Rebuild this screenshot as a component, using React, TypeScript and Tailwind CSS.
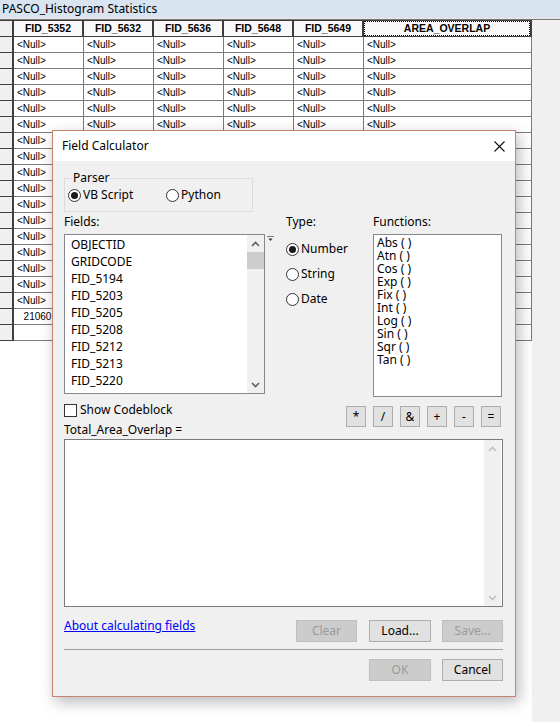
import React from "react";

const columns = ["FID_5352", "FID_5632", "FID_5636", "FID_5648", "FID_5649", "AREA_OVERLAP"];
const fields = ["OBJECTID", "GRIDCODE", "FID_5194", "FID_5203", "FID_5205", "FID_5208", "FID_5212", "FID_5213", "FID_5220"];
const functions = ["Abs", "Atn", "Cos", "Exp", "Fix", "Int", "Log", "Sin", "Sqr", "Tan"];
const operators = ["*", "/", "&", "+", "-", "="];

function Chevron({ up, color = "#606060" }: { up?: boolean; color?: string }) {
  return (
    <svg width="9" height="6" viewBox="0 0 9 6">
      <path
        d={up ? "M1 5 L4.5 1.5 L8 5" : "M1 1 L4.5 4.5 L8 1"}
        fill="none"
        stroke={color}
        strokeWidth="1.6"
      />
    </svg>
  );
}

function Radio({ checked, label }: { checked?: boolean; label: string }) {
  return (
    <div className="flex items-center h-[16px]">
      <div className="w-[13px] h-[13px] rounded-full border border-[#333333] bg-white flex items-center justify-center">
        {checked && <div className="w-[7px] h-[7px] rounded-full bg-[#1a1a1a]" />}
      </div>
      <span className="ml-[2px]">{label}</span>
    </div>
  );
}

function Button({ label, disabled, className = "" }: { label: string; disabled?: boolean; className?: string }) {
  return (
    <div
      className={`h-[22px] flex items-center justify-center border ${
        disabled ? "bg-[#cccccc] border-[#bfbfbf] text-[#9a9a9a]" : "bg-[#e1e1e1] border-[#adadad] text-black"
      } ${className}`}
    >
      {label}
    </div>
  );
}

export default function App() {
  const rows = Array.from({ length: 17 });

  return (
    <div className="relative w-[560px] h-[722px] overflow-hidden bg-white flex flex-col">
      {/* Window title */}
      <div className="h-[17px] bg-[#d9e4f1] pl-[2px] flex items-center font-['Noto_Sans',sans-serif] text-[12px] text-black">
        PASCO_Histogram Statistics
      </div>
      <div className="h-[3px] bg-[#e6e6e6] border-b border-[#7a7a7a]" />

      <div className="flex flex-1">
        {/* Table */}
        <div className="w-[532px] bg-white font-['Liberation_Sans',Arial,sans-serif] text-black">
          <div className="grid grid-cols-[14px_70px_70px_70px_70px_70px_168px] border-t border-[#3c3c3c]">
            <div className="h-[16px] bg-[#f0f0f0] border-r-2 border-b border-[#3c3c3c]" />
            {columns.map((c, i) => (
              <div
                key={c}
                className="h-[16px] bg-[#f8f8f8] border-r-2 border-b border-[#3c3c3c] flex items-stretch text-[10.5px] font-bold"
              >
                <div
                  className={`flex-1 flex items-center justify-center ${
                    i === columns.length - 1 ? "border border-dotted border-black" : ""
                  }`}
                >
                  {c}
                </div>
              </div>
            ))}

            {rows.map((_, r) => (
              <React.Fragment key={r}>
                <div className="h-[16px] bg-[#f0f0f0] border-r-2 border-b border-[#404040]" />
                {columns.map((c) => (
                  <div
                    key={c}
                    className="h-[16px] border-r border-b border-[#7a7a7a] pl-[3px] text-[10px] leading-[15px] overflow-hidden"
                  >
                    &lt;Null&gt;
                  </div>
                ))}
              </React.Fragment>
            ))}

            <div className="h-[16px] bg-[#f0f0f0] border-r-2 border-b border-[#404040]" />
            <div className="h-[16px] border-r border-b border-[#7a7a7a] pr-[1px] text-[10px] leading-[15px] text-right overflow-hidden whitespace-nowrap">
              21060.78531
            </div>
            {columns.slice(1).map((c) => (
              <div key={c} className="h-[16px] border-r border-b border-[#7a7a7a]" />
            ))}

            <div className="h-[16px] bg-[#f0f0f0] border-r-2 border-b border-[#404040]" />
            {columns.map((c) => (
              <div key={c} className="h-[16px] border-r border-b border-[#7a7a7a]" />
            ))}
          </div>
        </div>
        <div className="flex-1 bg-[#f0f0f0]" />
      </div>

      {/* Field Calculator dialog */}
      <div className="absolute left-[52px] top-[130px] w-[464px] h-[567px] border border-[#c7836d] bg-[#f0f0f0] shadow-[3px_5px_14px_rgba(0,0,0,0.28)] flex flex-col font-['Noto_Sans',sans-serif] text-[12px] leading-[16px] text-black">
        <div className="h-[30px] bg-white flex items-center justify-between pl-[9px] pr-[10px]">
          <span>Field Calculator</span>
          <svg width="11" height="11" viewBox="0 0 11 11">
            <path d="M0.5 0.5 L10.5 10.5 M10.5 0.5 L0.5 10.5" stroke="#111" strokeWidth="1.1" />
          </svg>
        </div>

        <div className="flex-1 flex flex-col pl-[11px] pr-[12px]">
          {/* Parser */}
          <div className="relative mt-[17px] w-[189px] h-[34px] border border-[#dcdcdc] flex items-center pl-[3px]">
            <span className="absolute left-[7px] -top-[9px] bg-[#f0f0f0] px-[1px]">Parser</span>
            <div className="w-[98px]">
              <Radio checked label="VB Script" />
            </div>
            <Radio label="Python" />
          </div>

          {/* Fields / Type / Functions */}
          <div className="flex mt-[2px]">
            <div className="w-[201px]">
              <div className="h-[16px]">Fields:</div>
              <div className="mt-[4px] h-[160px] border border-[#828790] bg-white flex">
                <div className="flex-1 pl-[6px] pt-[1px] overflow-hidden">
                  {fields.map((f) => (
                    <div key={f} className="leading-[17px]">
                      {f}
                    </div>
                  ))}
                </div>
                <div className="w-[17px] bg-[#f0f0f0] flex flex-col items-center">
                  <div className="h-[17px] flex items-center justify-center">
                    <Chevron up />
                  </div>
                  <div className="w-[17px] h-[17px] bg-[#cdcdcd]" />
                  <div className="flex-1" />
                  <div className="h-[17px] flex items-center justify-center">
                    <Chevron />
                  </div>
                </div>
              </div>
            </div>

            <div className="w-[21px] pt-[22px] pl-[2px]">
              <svg width="7" height="6" viewBox="0 0 7 6">
                <path d="M0 0.5 H7" stroke="#777" strokeWidth="1" />
                <path d="M1.5 2.5 H5.5 L3.5 5 Z" fill="#333" />
              </svg>
            </div>

            <div className="w-[87px]">
              <div className="h-[16px]">Type:</div>
              <div className="mt-[11px] flex flex-col gap-[9px]">
                <Radio checked label="Number" />
                <Radio label="String" />
                <Radio label="Date" />
              </div>
            </div>

            <div className="w-[129px]">
              <div className="h-[16px]">Functions:</div>
              <div className="mt-[4px] h-[163px] border border-[#828790] bg-white pl-[3px] pt-[1px]">
                {functions.map((f) => (
                  <div key={f} className="leading-[13px]">
                    {f} ( )
                  </div>
                ))}
              </div>
            </div>
          </div>

          {/* Codeblock + operators */}
          <div className="flex justify-between mt-[6px]">
            <div className="flex flex-col">
              <div className="flex items-center h-[14px]">
                <div className="w-[13px] h-[13px] border border-[#333333] bg-white" />
                <span className="ml-[3px]">Show Codeblock</span>
              </div>
              <div className="mt-[5px] h-[16px]">Total_Area_Overlap =</div>
            </div>
            <div className="flex gap-[7px] mt-[3px] mr-[2px]">
              {operators.map((o) => (
                <div
                  key={o}
                  className="w-[20px] h-[21px] bg-[#e1e1e1] border border-[#adadad] flex items-center justify-center"
                >
                  {o}
                </div>
              ))}
            </div>
          </div>

          {/* Expression box */}
          <div className="mt-[1px] h-[168px] border border-[#7a7a7a] bg-white flex justify-end">
            <div className="w-[17px] mr-[1px] bg-[#f0f0f0] flex flex-col items-center">
              <div className="h-[17px] flex items-center justify-center">
                <Chevron up color="#c0c0c0" />
              </div>
              <div className="flex-1" />
              <div className="h-[17px] flex items-center justify-center">
                <Chevron color="#c0c0c0" />
              </div>
            </div>
          </div>

          {/* Link + Clear/Load/Save */}
          <div className="flex justify-between items-start mt-[11px]">
            <span className="text-[#0000ff] underline">About calculating fields</span>
            <div className="flex mt-[2px]">
              <Button label="Clear" disabled className="w-[61px] mr-[12px]" />
              <Button label="Load..." className="w-[62px] mr-[11px]" />
              <Button label="Save..." disabled className="w-[61px]" />
            </div>
          </div>

          <div className="mt-[7px] h-[1px] bg-[#a0a0a0]" />

          <div className="flex justify-end mt-[9px]">
            <Button label="OK" disabled className="w-[62px] mr-[11px]" />
            <Button label="Cancel" className="w-[61px]" />
          </div>
        </div>
      </div>
    </div>
  );
}
